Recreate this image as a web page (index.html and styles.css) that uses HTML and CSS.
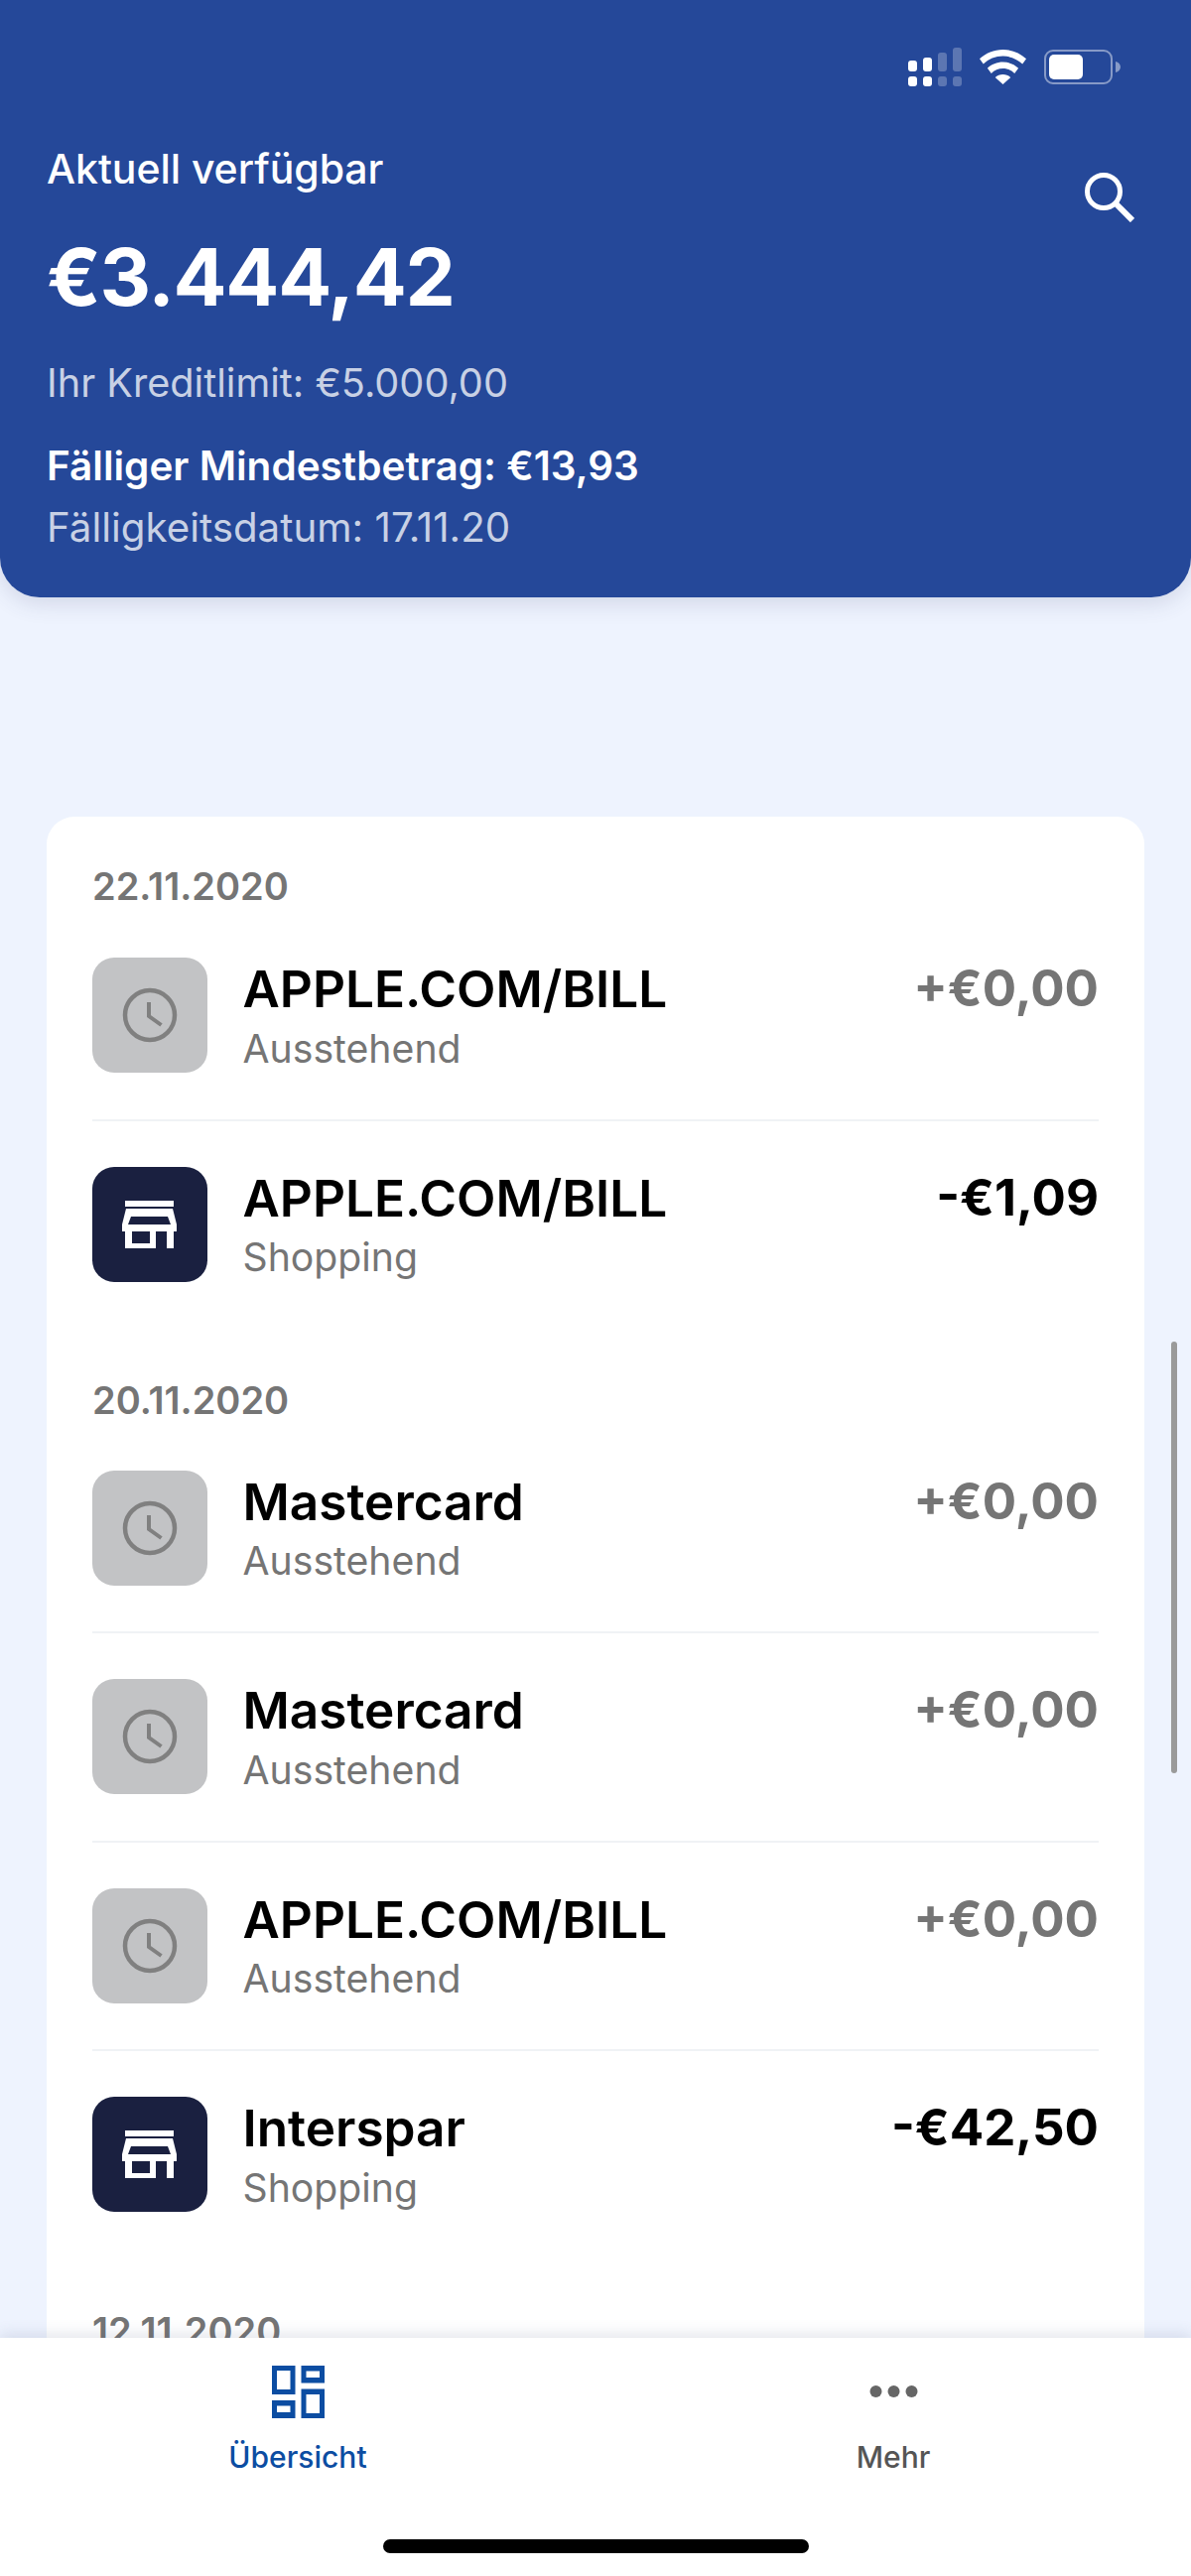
FILE: index.html
```html
<!DOCTYPE html>
<html lang="de">
<head>
<meta charset="utf-8">
<title>Übersicht</title>
<link rel="stylesheet" href="styles.css">
</head>
<body>
<div class="screen">
  <header class="hero">
    <div class="status">
      <svg class="ic-signal" viewBox="0 0 54 39" width="54" height="39">
        <g fill="#fff">
          <rect x="0" y="13" width="9" height="11" rx="3"/><rect x="0" y="29" width="9" height="10" rx="3"/>
          <rect x="15" y="10" width="9" height="14" rx="3"/><rect x="15" y="29" width="9" height="10" rx="3"/>
        </g>
        <g fill="#fff" opacity=".25">
          <rect x="30" y="5" width="9" height="19" rx="3"/><rect x="30" y="29" width="9" height="10" rx="3"/>
          <rect x="45" y="0" width="9" height="24" rx="3"/><rect x="45" y="29" width="9" height="10" rx="3"/>
        </g>
      </svg>
      <svg class="ic-wifi" viewBox="0 0 47 35" width="47" height="35">
        <path fill="#fff" d="M23.5 0C14.5 0 6.300 3.500 0 9.300l3.800 5.200C9.200 9.500 16 6.600 23.500 6.600s14.300 2.900 19.700 7.900L47 9.300C40.700 3.500 32.500 0 23.500 0zM23.500 12.500c-6 0-11.500 2.300-15.600 6.200l3.900 5.200c3-3 7.200-4.800 11.700-4.800s8.700 1.800 11.700 4.800l3.900-5.200C35 14.800 29.500 12.500 23.500 12.500zM23.500 25c-3 0-5.800 1.100-7.800 3.100L23.500 35l7.800-6.900C29.300 26.100 26.500 25 23.500 25z"/>
      </svg>
      <svg class="ic-battery" viewBox="0 0 77 35" width="77" height="35">
        <rect x="1" y="1" width="67" height="33" rx="8" fill="none" stroke="#fff" stroke-opacity=".45" stroke-width="2"/>
        <rect x="5" y="5" width="34" height="25" rx="5" fill="#fff"/>
        <path d="M72 12c3 .5 5 3 5 5.500s-2 5-5 5.500z" fill="#fff" fill-opacity=".45"/>
      </svg>
    </div>
    <div class="hero-body">
      <div class="hero-text">
        <p class="avail">Aktuell verfügbar</p>
        <p class="balance">€3.444,42</p>
        <p class="limit">Ihr Kreditlimit: €5.000,00</p>
        <p class="minimum">Fälliger Mindestbetrag: €13,93</p>
        <p class="due">Fälligkeitsdatum: 17.11.20</p>
      </div>
      <svg class="ic-search" viewBox="0 0 50 50" width="50" height="50">
        <circle cx="19" cy="19" r="16.500" fill="none" stroke="#fff" stroke-width="5"/>
        <path d="M31 31l17 17" fill="none" stroke="#fff" stroke-width="6"/>
      </svg>
    </div>
  </header>

  <main class="card">
    <p class="date">22.11.2020</p>
    <div class="row">
      <span class="tile tile-pending"><svg viewBox="0 0 116 116" width="116" height="116"><circle cx="58" cy="58" r="25" fill="none" stroke="#808080" stroke-width="4.500"/><path d="M57 45v14l12.500 9" fill="none" stroke="#808080" stroke-width="4"/></svg></span>
      <div class="info"><p class="name">APPLE.COM/BILL</p><p class="cat">Ausstehend</p></div>
      <p class="amount amount-pending">+€0,00</p>
    </div>
    <div class="row">
      <span class="tile tile-shop"><svg viewBox="0 0 116 116" width="116" height="116"><path fill="#fff" fill-rule="evenodd" d="M33 34h49v6H33zM34 42h47l4 16v7H30v-7zM39 50l-3 8h43l-3-8zM33 65h7v12h18V65h6v17H33zM75 65h7v17h-7z"/></svg></span>
      <div class="info"><p class="name">APPLE.COM/BILL</p><p class="cat">Shopping</p></div>
      <p class="amount">-€1,09</p>
    </div>

    <p class="date date-next">20.11.2020</p>
    <div class="row">
      <span class="tile tile-pending"><svg viewBox="0 0 116 116" width="116" height="116"><circle cx="58" cy="58" r="25" fill="none" stroke="#808080" stroke-width="4.500"/><path d="M57 45v14l12.500 9" fill="none" stroke="#808080" stroke-width="4"/></svg></span>
      <div class="info"><p class="name">Mastercard</p><p class="cat">Ausstehend</p></div>
      <p class="amount amount-pending">+€0,00</p>
    </div>
    <div class="row">
      <span class="tile tile-pending"><svg viewBox="0 0 116 116" width="116" height="116"><circle cx="58" cy="58" r="25" fill="none" stroke="#808080" stroke-width="4.500"/><path d="M57 45v14l12.500 9" fill="none" stroke="#808080" stroke-width="4"/></svg></span>
      <div class="info"><p class="name">Mastercard</p><p class="cat">Ausstehend</p></div>
      <p class="amount amount-pending">+€0,00</p>
    </div>
    <div class="row">
      <span class="tile tile-pending"><svg viewBox="0 0 116 116" width="116" height="116"><circle cx="58" cy="58" r="25" fill="none" stroke="#808080" stroke-width="4.500"/><path d="M57 45v14l12.500 9" fill="none" stroke="#808080" stroke-width="4"/></svg></span>
      <div class="info"><p class="name">APPLE.COM/BILL</p><p class="cat">Ausstehend</p></div>
      <p class="amount amount-pending">+€0,00</p>
    </div>
    <div class="row">
      <span class="tile tile-shop"><svg viewBox="0 0 116 116" width="116" height="116"><path fill="#fff" fill-rule="evenodd" d="M33 34h49v6H33zM34 42h47l4 16v7H30v-7zM39 50l-3 8h43l-3-8zM33 65h7v12h18V65h6v17H33zM75 65h7v17h-7z"/></svg></span>
      <div class="info"><p class="name">Interspar</p><p class="cat">Shopping</p></div>
      <p class="amount">-€42,50</p>
    </div>

    <p class="date date-next">12.11.2020</p>
  </main>

  <div class="scrollbar"></div>

  <nav class="tabbar">
    <div class="tabs">
      <div class="tab tab-active">
        <svg viewBox="0 0 53 53" width="53" height="53">
          <path fill="#0c4da2" fill-rule="evenodd" d="M0 0h23.500v29H0zM5 5v19h13.500V5zM29.500 0H53v17.500H29.500zM34.500 5.500v6.500H48V5.500zM29.500 23.500H53V53H29.500zM34.500 29v19H48V29zM0 35h23.500v18H0zM5 40.500V47h13.500v-6.500z"/>
        </svg>
        <span class="tab-label">Übersicht</span>
      </div>
      <div class="tab">
        <svg viewBox="0 0 53 53" width="53" height="53">
          <g fill="#666"><circle cx="8.500" cy="26" r="6"/><circle cx="26.500" cy="26" r="6"/><circle cx="44.500" cy="26" r="6"/></g>
        </svg>
        <span class="tab-label">Mehr</span>
      </div>
    </div>
    <div class="home"></div>
  </nav>
</div>
</body>
</html>
```

FILE: styles.css
```css
* { box-sizing: border-box; }
html, body { margin: 0; padding: 0; }
p { margin: 0; }
body { font-family: Inter, "Noto Sans", sans-serif; background: #eef3fe; }

.screen {
  position: relative;
  width: 1200px;
  height: 2596px;
  overflow: hidden;
  background: #eef3fe;
}

.hero {
  height: 602px;
  padding: 48px 47px 0 47px;
  background: #254899;
  border-radius: 0 0 40px 40px;
  box-shadow: 0 6px 22px rgba(60, 70, 110, .16);
  color: #fff;
}

.status {
  display: flex;
  justify-content: flex-end;
  align-items: flex-start;
  height: 39px;
  padding-right: 24px;
}
.ic-signal { margin-right: 18px; }
.ic-wifi { margin-top: 2px; margin-right: 18px; }
.ic-battery { margin-top: 2px; }

.hero-body {
  display: flex;
  justify-content: space-between;
  align-items: flex-start;
  padding-top: 60px;
}
.ic-search { margin-top: 27px; margin-right: 10px; }

.avail { font-size: 41px; line-height: 46px; font-weight: 500; letter-spacing: -.05px; }
.balance { margin-top: 38px; font-size: 80px; line-height: 96px; font-weight: 700; letter-spacing: -1.3px; }
.limit { margin-top: 36px; font-size: 39.700px; line-height: 46px; color: rgba(255, 255, 255, .75); }
.minimum { margin-top: 38px; font-size: 40.500px; line-height: 46px; font-weight: 600; }
.due { margin-top: 16px; font-size: 40.300px; line-height: 46px; color: rgba(255, 255, 255, .75); }

.card {
  margin: 221px 47px 0;
  padding: 46px 46px 0;
  height: 1800px;
  background: #fff;
  border-radius: 28px;
}

.date { margin-bottom: 2px; font-size: 38px; line-height: 48px; font-weight: 600; color: #757575; }
.date-next { margin-top: 49px; margin-bottom: .5px; }

.row {
  display: flex;
  align-items: flex-start;
  padding: 46px 0 46.500px;
  border-bottom: 2px solid #f0f2f5;
}
.row:has(+ .date) { border-bottom: 0; }

.tile {
  display: block;
  flex: none;
  width: 116px;
  height: 116px;
  border-radius: 22px;
}
.tile svg { display: block; }
.tile-pending { background: #c2c3c5; }
.tile-shop { background: #1a2040; }

.info { flex: 1; margin-left: 35.500px; padding-top: 2px; }
.name { font-size: 51.300px; line-height: 58px; font-weight: 600; color: #000; }
.cat { margin-top: 8.500px; font-size: 39.200px; line-height: 46px; color: #757575; }

.amount { margin-top: 2px; font-size: 51px; line-height: 58px; font-weight: 700; color: #000; }
.amount-pending { color: #757575; }

.scrollbar {
  position: absolute;
  left: 1180px;
  top: 1352px;
  width: 6px;
  height: 435px;
  border-radius: 3px;
  background: #9a9a9a;
}

.tabbar {
  position: absolute;
  left: 0;
  right: 0;
  bottom: 0;
  height: 240px;
  background: #fff;
  box-shadow: 0 -4px 14px rgba(60, 70, 110, .14);
}
.tabs { display: flex; padding-top: 28px; }
.tab {
  flex: 1;
  display: flex;
  flex-direction: column;
  align-items: center;
}
.tab-label {
  margin-top: 22px;
  font-size: 30px;
  line-height: 34px;
  font-weight: 500;
  color: #555;
}
.tab-active .tab-label { color: #0c4da2; }

.home {
  position: absolute;
  left: 386px;
  bottom: 23px;
  width: 429px;
  height: 14px;
  border-radius: 7px;
  background: #000;
}
```
